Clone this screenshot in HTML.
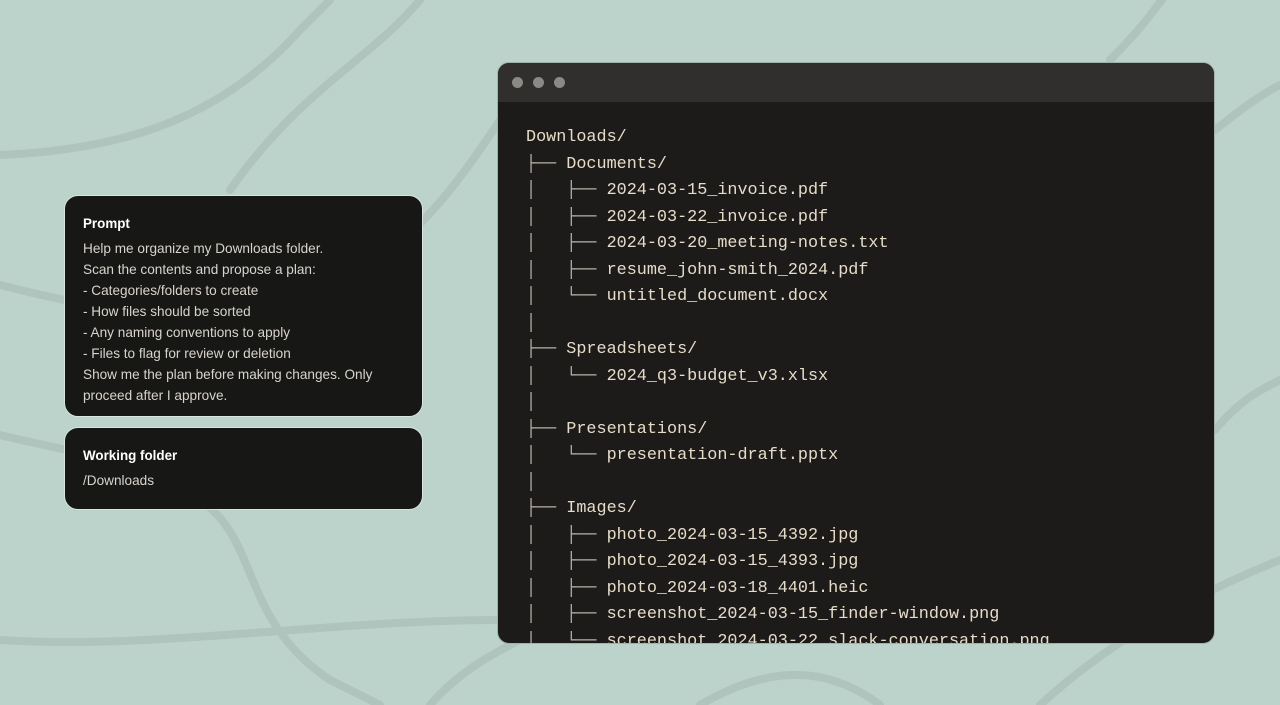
<!DOCTYPE html>
<html><head><meta charset="utf-8"><style>
html,body{margin:0;padding:0;}
body{width:1280px;height:705px;background:#bcd3cc;position:relative;overflow:hidden;font-family:"Liberation Sans",sans-serif;}
svg.bg{position:absolute;left:0;top:0;}
.card{position:absolute;left:64px;width:359px;background:#171716;border:1px solid #d8e4e0;border-radius:14px;box-sizing:border-box;color:#d8d4cc;font-size:13.6px;line-height:21px;padding:0 18px;}
.card b{color:#fff;font-weight:600;display:block;margin-bottom:4px;font-size:13.4px;}
.win{position:absolute;left:497px;top:62px;width:718px;height:582px;background:#1c1b1a;border-radius:12px;overflow:hidden;border:1px solid #9fb3ad;box-sizing:border-box;}
.bar{height:39px;background:#302f2d;position:relative;}
.dot{position:absolute;top:14px;width:11px;height:11px;border-radius:50%;background:#8a8985;}
pre{margin:0;position:absolute;left:28px;top:62px;font-family:"Liberation Mono","DejaVu Sans Mono",monospace;font-size:16.8px;line-height:26.5px;color:#e6dcc8;}
.t{color:#bdb7ac;}
</style></head><body>
<svg class="bg" width="1280" height="705" fill="none" stroke="#aec4bd" stroke-width="8" stroke-linecap="round">
<path d="M0 155 C120 150 220 120 300 30 L330 0"/>
<path d="M230 190 C300 90 370 60 420 0"/>
<path d="M0 285 C100 310 200 330 300 300 C400 270 460 180 500 120"/>
<path d="M0 435 C60 450 140 460 200 500 C260 540 240 620 330 680 L380 705"/>
<path d="M0 640 C150 650 330 620 500 620"/>
<path d="M1110 60 C1150 20 1160 0 1170 -10"/>
<path d="M1215 130 C1240 110 1260 95 1280 85"/>
<path d="M1215 430 C1240 400 1260 390 1280 380"/>
<path d="M1040 705 C1100 650 1180 600 1280 560"/>
<path d="M700 705 C760 670 820 660 880 705"/>
<path d="M430 705 C460 670 500 650 520 640"/>
</svg>
<div class="card" style="top:195px;height:222px;padding-top:17px;"><b>Prompt</b>Help me organize my Downloads folder.<br>Scan the contents and propose a plan:<br>- Categories/folders to create<br>- How files should be sorted<br>- Any naming conventions to apply<br>- Files to flag for review or deletion<br>Show me the plan before making changes. Only<br>proceed after I approve.</div>
<div class="card" style="top:427px;height:83px;padding-top:17px;"><b>Working folder</b>/Downloads</div>
<div class="win"><div class="bar"><div class="dot" style="left:14px"></div><div class="dot" style="left:35px"></div><div class="dot" style="left:56px"></div></div>
<pre>Downloads/
<span class="t">├──</span> Documents/
<span class="t">│   ├──</span> 2024-03-15_invoice.pdf
<span class="t">│   ├──</span> 2024-03-22_invoice.pdf
<span class="t">│   ├──</span> 2024-03-20_meeting-notes.txt
<span class="t">│   ├──</span> resume_john-smith_2024.pdf
<span class="t">│   └──</span> untitled_document.docx
<span class="t">│</span>
<span class="t">├──</span> Spreadsheets/
<span class="t">│   └──</span> 2024_q3-budget_v3.xlsx
<span class="t">│</span>
<span class="t">├──</span> Presentations/
<span class="t">│   └──</span> presentation-draft.pptx
<span class="t">│</span>
<span class="t">├──</span> Images/
<span class="t">│   ├──</span> photo_2024-03-15_4392.jpg
<span class="t">│   ├──</span> photo_2024-03-15_4393.jpg
<span class="t">│   ├──</span> photo_2024-03-18_4401.heic
<span class="t">│   ├──</span> screenshot_2024-03-15_finder-window.png
<span class="t">│   └──</span> screenshot_2024-03-22_slack-conversation.png</pre>
</div>
</body></html>
